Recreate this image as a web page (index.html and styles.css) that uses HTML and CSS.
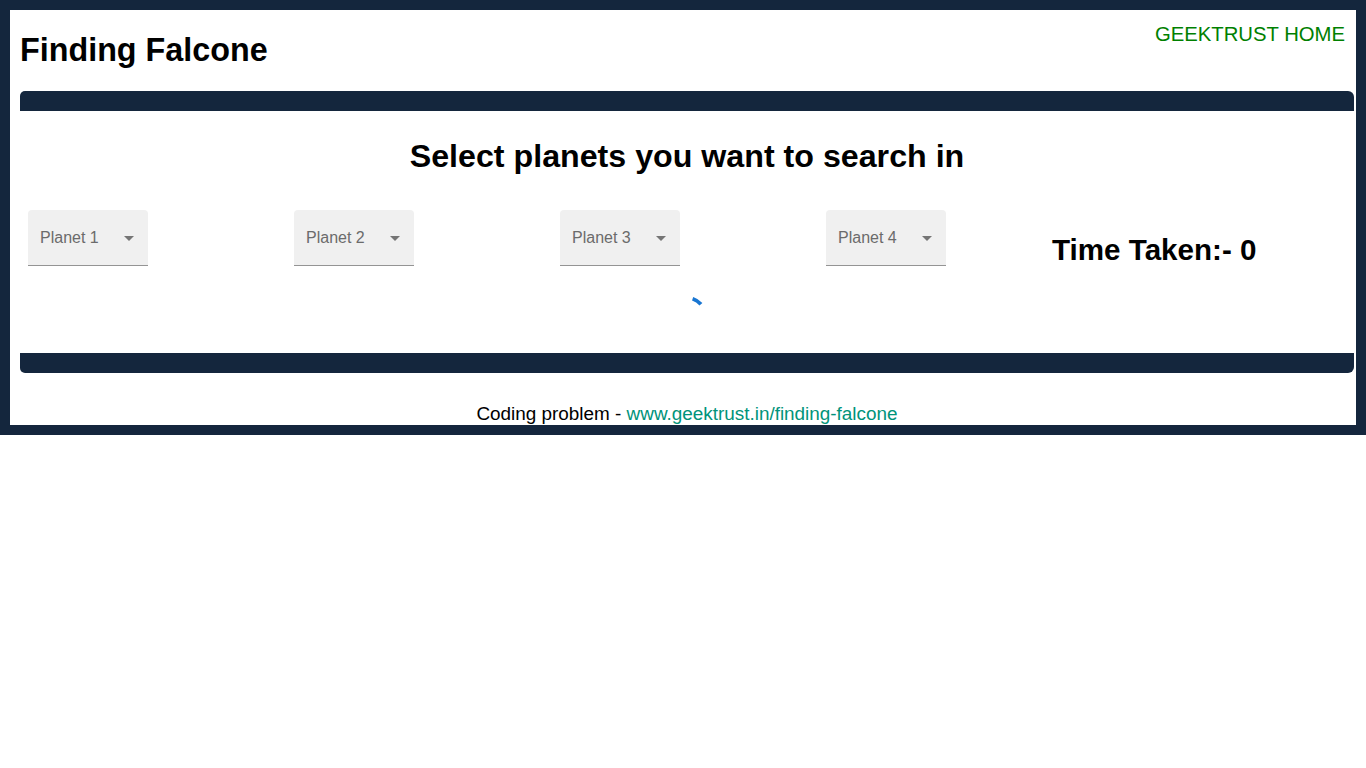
FILE: index.html
```html
<!DOCTYPE html>
<html lang="en">
<head>
<meta charset="utf-8">
<title>Finding Falcone</title>
<link rel="stylesheet" href="styles.css">
</head>
<body>
<div class="frame">
  <div class="page">
    <header class="header">
      <h1 class="title">Finding Falcone</h1>
      <a class="home-link" href="#">GEEKTRUST HOME</a>
    </header>
    <div class="bar bar-top"></div>
    <h2 class="heading">Select planets you want to search in</h2>
    <div class="row">
      <div class="cell">
        <div class="select"><span class="select-label">Planet 1</span><svg class="select-arrow" viewBox="0 0 24 24"><path d="M7 10l5 5 5-5z"/></svg></div>
      </div>
      <div class="cell">
        <div class="select"><span class="select-label">Planet 2</span><svg class="select-arrow" viewBox="0 0 24 24"><path d="M7 10l5 5 5-5z"/></svg></div>
      </div>
      <div class="cell">
        <div class="select"><span class="select-label">Planet 3</span><svg class="select-arrow" viewBox="0 0 24 24"><path d="M7 10l5 5 5-5z"/></svg></div>
      </div>
      <div class="cell">
        <div class="select"><span class="select-label">Planet 4</span><svg class="select-arrow" viewBox="0 0 24 24"><path d="M7 10l5 5 5-5z"/></svg></div>
      </div>
      <div class="cell time-cell">
        <h2 class="time">Time Taken:- 0</h2>
      </div>
    </div>
    <div class="spinner-wrap">
      <svg class="spinner" viewBox="0 0 40 40"><path d="M25.62 2.69 A18.2 18.2 0 0 1 33.94 8.30" fill="none" stroke="#1976d2" stroke-width="3.8"/></svg>
    </div>
    <div class="bar bar-bottom"></div>
    <h3 class="footer">Coding problem - <a class="footer-link" href="#">www.geektrust.in/finding-falcone</a></h3>
  </div>
</div>
</body>
</html>
```
FILE: styles.css
```css
html, body {
  margin: 0;
  padding: 0;
  background: #ffffff;
}

body {
  font-family: "Liberation Sans", Arial, sans-serif;
  color: #000000;
}

.frame {
  background: #14263d;
  padding: 10px;
}

.page {
  background: #ffffff;
  padding: 0 2px 0 10px;
}

.header {
  display: flex;
  justify-content: space-between;
  align-items: flex-start;
  height: 81px;
}

.title {
  margin: 22px 0 0 0;
  font-size: 32.3px;
  line-height: 37px;
  font-weight: bold;
}

.home-link {
  margin: 13px 9px 0 0;
  font-size: 20.3px;
  line-height: 23px;
  color: #008000;
  text-decoration: none;
}

.bar {
  height: 20px;
  background: #14263d;
}

.bar-top {
  border-radius: 5px 6px 0 0;
}

.bar-bottom {
  border-radius: 0 0 6px 5px;
}

.heading {
  margin: 27px 0 0 0;
  font-size: 32.2px;
  line-height: 37px;
  font-weight: bold;
  text-align: center;
}

.row {
  display: grid;
  grid-template-columns: 266px 266px 266px 234px 1fr;
  margin-top: 35px;
  height: 56px;
}

.cell {
  padding-left: 8px;
}

.time-cell {
  padding-left: 0;
}

.select {
  position: relative;
  box-sizing: border-box;
  width: 120px;
  height: 56px;
  background: #f0f0f0;
  border-radius: 4px 4px 0 0;
  border-bottom: 1px solid #949494;
  display: flex;
  align-items: center;
  padding-left: 12px;
  padding-top: 1px;
}

.select-label {
  font-size: 16px;
  color: #6b6b6b;
}

.select-arrow {
  position: absolute;
  right: 7px;
  top: 16px;
  width: 24px;
  height: 24px;
  fill: #757575;
}

.time {
  margin: 23px 0 0 0;
  font-size: 29.6px;
  font-weight: bold;
  line-height: 33px;
}

.spinner-wrap {
  display: flex;
  justify-content: center;
  margin-top: 30px;
  height: 40px;
  margin-bottom: 17px;
}

.spinner {
  width: 40px;
  height: 40px;
}

.footer {
  margin: 30px 0 0 0;
  font-size: 18.9px;
  line-height: 22px;
  font-weight: normal;
  text-align: center;
}

.footer-link {
  color: #00937a;
  text-decoration: none;
}
```
